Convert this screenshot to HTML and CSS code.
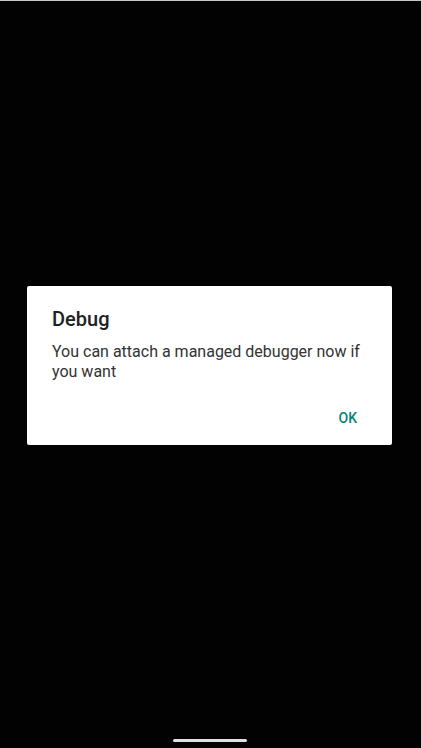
FILE: index.html
```html
<!DOCTYPE html>
<html>
<head>
<meta charset="utf-8">
<link rel="stylesheet" href="styles.css">
</head>
<body>
<div class="screen">
  <div class="dialog">
    <h1 class="title">Debug</h1>
    <p class="message">You can attach a managed debugger now if you want</p>
    <div class="actions">
      <button class="btn">OK</button>
    </div>
  </div>
  <div class="home-indicator"></div>
</div>
</body>
</html>
```

FILE: styles.css
```css
html, body {
  margin: 0;
  padding: 0;
  background: #000;
}
.screen {
  width: 421px;
  height: 748px;
  box-sizing: border-box;
  border-top: 1px solid #c8c8c8;
  background: #020202;
  display: flex;
  flex-direction: column;
  align-items: flex-start;
  padding-top: 285px;
  font-family: Roboto, "Noto Sans", sans-serif;
}
.dialog {
  margin-left: 27px;
  width: 365px;
  height: 159px;
  box-sizing: border-box;
  background: #fff;
  border-radius: 2px;
  padding: 21px 20px 0 25px;
  display: flex;
  flex-direction: column;
}
.title {
  margin: 0;
  font-size: 20px;
  line-height: 24px;
  font-weight: 500;
  color: #212121;
}
.message {
  margin: 11px 0 0;
  font-size: 16px;
  line-height: 20px;
  color: #333;
}
.actions {
  margin-top: 28px;
  display: flex;
  justify-content: flex-end;
  padding-right: 15px;
}
.btn {
  border: 0;
  padding: 0;
  background: none;
  font-family: Roboto, "Noto Sans", sans-serif;
  font-size: 14px;
  line-height: 16px;
  font-weight: 500;
  color: #008577;
}
.home-indicator {
  margin-top: auto;
  margin-bottom: 6px;
  margin-left: 173px;
  width: 74px;
  height: 3px;
  border-radius: 2px;
  background: #e0e0e0;
}
```
